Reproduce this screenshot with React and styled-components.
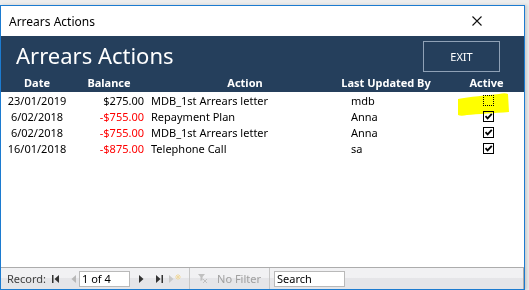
import styled, { createGlobalStyle } from "styled-components"

const rows = [
    { date: "23/01/2019", balance: "$275.00", negative: false, action: "MDB_1st Arrears letter", user: "mdb", active: false, focused: true },
    { date: "6/02/2018", balance: "-$755.00", negative: true, action: "Repayment Plan", user: "Anna", active: true },
    { date: "6/02/2018", balance: "-$755.00", negative: true, action: "MDB_1st Arrears letter", user: "Anna", active: true },
    { date: "16/01/2018", balance: "-$875.00", negative: true, action: "Telephone Call", user: "sa", active: true },
]

const GlobalStyle = createGlobalStyle`
    body {
        margin: 0;
        background: #ededed;
        font-family: "Noto Sans", "Open Sans", sans-serif;
    }
`

const App = () => {
    return <>
        <GlobalStyle />
        <Window>
            <TitleBar>
                <span>Arrears Actions</span>
                <CloseIcon width="10" height="10" viewBox="0 0 10 10">
                    <path d="M0.5 0.5 L9.5 9.5 M9.5 0.5 L0.5 9.5" stroke="#111" strokeWidth="1.1" />
                </CloseIcon>
            </TitleBar>
            <Header>
                <TopRow>
                    <BigTitle>Arrears Actions</BigTitle>
                    <ExitButton>EXIT</ExitButton>
                </TopRow>
                <ColumnRow>
                    <HeadCell>Date</HeadCell>
                    <HeadCell>Balance</HeadCell>
                    <HeadCell>Action</HeadCell>
                    <HeadCell $shift={-14}>Last Updated By</HeadCell>
                    <HeadCell $shift={-3}>Active</HeadCell>
                </ColumnRow>
            </Header>
            <Body>
                {rows.map((r, i) => (
                    <Row key={i}>
                        <DateCell>{r.date}</DateCell>
                        <BalanceCell $negative={r.negative}>{r.balance}</BalanceCell>
                        <TextCell>{r.action}</TextCell>
                        <TextCell>{r.user}</TextCell>
                        <CheckCell>
                            <CheckBox $focused={r.focused}>
                                {r.active &&
                                    <svg width="9" height="9" viewBox="0 0 9 9">
                                        <path d="M1.5 4.2 L3.6 6.4 L7.8 1.8" stroke="#000" strokeWidth="1.8" fill="none" />
                                    </svg>}
                            </CheckBox>
                        </CheckCell>
                    </Row>
                ))}
                <Highlight width="54" height="26" viewBox="0 0 54 26">
                    <path d="M1 7 C12 5 30 3 42 2 C46 1 49 1 51 2 L52 20 C38 21 20 22 10 23 C6 24 3 24 1 23 Z" fill="#ffff00" />
                </Highlight>
            </Body>
            <StatusBar>
                <StatusLabel>Record:</StatusLabel>
                <NavIcon width="7" height="8" viewBox="0 0 7 8" $left={6}>
                    <rect x="0" y="0" width="1.5" height="8" fill="#333" />
                    <path d="M7 0 L2.5 4 L7 8 Z" fill="#333" />
                </NavIcon>
                <NavIcon width="5" height="8" viewBox="0 0 5 8" $left={12}>
                    <path d="M5 0 L0.5 4 L5 8 Z" fill="#b8b8b8" />
                </NavIcon>
                <RecordBox>1 of 4</RecordBox>
                <NavIcon width="5" height="8" viewBox="0 0 5 8" $left={9}>
                    <path d="M0 0 L4.5 4 L0 8 Z" fill="#333" />
                </NavIcon>
                <NavIcon width="7" height="8" viewBox="0 0 7 8" $left={12}>
                    <path d="M0 0 L4.5 4 L0 8 Z" fill="#333" />
                    <rect x="5.5" y="0" width="1.5" height="8" fill="#333" />
                </NavIcon>
                <NavIcon width="12" height="9" viewBox="0 0 12 9" $left={6}>
                    <path d="M0 1 L4.5 5 L0 9 Z" fill="#c8c8c8" />
                    <path d="M9 0 V6 M6 3 H12 M7 1 L11 5 M11 1 L7 5" stroke="#f0d9a0" strokeWidth="1" />
                </NavIcon>
                <Divider $left={8} />
                <NavIcon width="9" height="9" viewBox="0 0 9 9" $left={8}>
                    <path d="M0 0 H7 L4.5 3 V6 L2.5 7 V3 Z" fill="#c0c0c0" />
                    <path d="M5 5 L9 9 M9 5 L5 9" stroke="#c0c0c0" strokeWidth="1" />
                </NavIcon>
                <MutedText>No Filter</MutedText>
                <Divider $left={8} />
                <SearchBox>Search</SearchBox>
            </StatusBar>
        </Window>
    </>
}

const Window = styled.div`
    position: relative;
    margin-top: 5px;
    width: 523px;
    height: 283px;
    border: 1px solid #1c7bd0;
    background: #ffffff;
    display: flex;
    flex-direction: column;
    box-shadow: 2px 0 3px rgba(0, 0, 0, 0.15);
`

const TitleBar = styled.div`
    height: 30px;
    flex-shrink: 0;
    display: flex;
    align-items: center;
    justify-content: space-between;
    padding: 0 42px 0 8px;
    font-size: 12px;
    color: #000;
`

const CloseIcon = styled.svg`
    display: block;
`

const Header = styled.div`
    background: #253f5c;
    height: 56px;
    flex-shrink: 0;
    display: flex;
    flex-direction: column;
    padding-top: 4px;
    box-sizing: border-box;
`

const TopRow = styled.div`
    height: 32px;
    display: flex;
    align-items: center;
    justify-content: space-between;
    padding: 0 24px 0 15px;
`

const BigTitle = styled.div`
    color: #ffffff;
    font-size: 22px;
    line-height: 28px;
    margin-top: -2px;
`

const ExitButton = styled.div`
    width: 75px;
    height: 29px;
    border: 1px solid #8fa1b6;
    display: flex;
    align-items: center;
    justify-content: center;
    color: #ffffff;
    font-size: 11px;
`

const columns = "72px 72px 200px 110px 1fr"

const ColumnRow = styled.div`
    display: grid;
    grid-template-columns: ${columns};
    height: 20px;
    align-items: center;
`

const HeadCell = styled.div`
    color: #ffffff;
    font-weight: 700;
    font-size: 11px;
    text-align: center;
    transform: translateX(${p => p.$shift || 0}px);
    white-space: nowrap;
`

const Body = styled.div`
    flex: 1;
    position: relative;
`

const Row = styled.div`
    display: grid;
    grid-template-columns: ${columns};
    height: 16px;
    align-items: center;
    font-size: 11px;
    color: #000;
    white-space: nowrap;
`

const DateCell = styled.div`
    text-align: center;
`

const BalanceCell = styled.div`
    text-align: right;
    padding-right: 1px;
    color: ${p => p.$negative ? "#ff0000" : "#000"};
`

const TextCell = styled.div`
    padding-left: 6px;
`

const CheckCell = styled.div`
    display: flex;
    justify-content: center;
    padding-right: 2px;
`

const CheckBox = styled.div`
    width: 9px;
    height: 9px;
    border: 1px ${p => p.$focused ? "dotted" : "solid"} #000;
    display: flex;
    align-items: center;
    justify-content: center;
    position: relative;
    z-index: 1;
`

const Highlight = styled.svg`
    position: absolute;
    left: 456px;
    top: 0px;
    mix-blend-mode: multiply;
    z-index: 2;
    pointer-events: none;
`

const StatusBar = styled.div`
    height: 21px;
    flex-shrink: 0;
    border-top: 1px solid #acacac;
    border-right: 1px solid #acacac;
    background: linear-gradient(#f1f1f3 0%, #f1f1f3 45%, #e5e5e8 50%, #e5e5e8 100%);
    display: flex;
    align-items: center;
    padding-left: 6px;
    font-size: 11px;
`

const StatusLabel = styled.span`
    color: #404040;
`

const NavIcon = styled.svg`
    display: block;
    margin-left: ${p => p.$left}px;
    flex-shrink: 0;
`

const RecordBox = styled.div`
    margin-left: 3px;
    width: 47px;
    height: 14px;
    border: 1px solid #b9b9b9;
    background: #fff;
    line-height: 14px;
    padding-left: 2px;
    color: #000;
`

const Divider = styled.div`
    margin-left: ${p => p.$left}px;
    width: 1px;
    height: 21px;
    background: #c6c6c6;
`

const MutedText = styled.span`
    margin-left: 10px;
    color: #a0a0a0;
`

const SearchBox = styled.div`
    margin-left: 4px;
    width: 67px;
    height: 14px;
    border: 1px solid #b9b9b9;
    background: #fff;
    line-height: 14px;
    padding-left: 2px;
    color: #000;
`

export default App
